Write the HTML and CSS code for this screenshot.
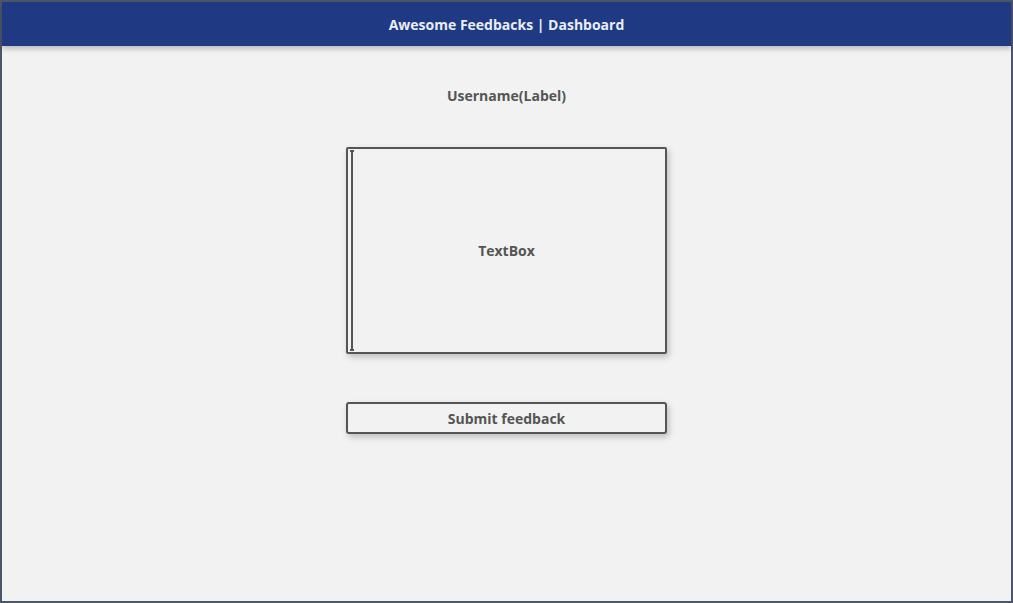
FILE: index.html
```html
<!DOCTYPE html>
<html>
<head>
<meta charset="utf-8">
<link rel="stylesheet" href="styles.css">
</head>
<body>
<div class="frame">
  <header class="topbar">Awesome Feedbacks | Dashboard</header>
  <main class="content">
    <div class="label">Username(Label)</div>
    <div class="textbox">
      <span class="caret"></span>
      <span class="tb-text">TextBox</span>
    </div>
    <button class="submit">Submit feedback</button>
  </main>
</div>
</body>
</html>
```

FILE: styles.css
```css
html, body {
  margin: 0;
  padding: 0;
}
body {
  width: 1013px;
  height: 603px;
  overflow: hidden;
  font-family: "Open Sans", "Noto Sans", sans-serif;
}
.frame {
  box-sizing: border-box;
  width: 1013px;
  height: 603px;
  border: 2px solid #4c5668;
  background: #f2f2f2;
  display: flex;
  flex-direction: column;
}
.topbar {
  height: 44px;
  background: #1f3a82;
  color: #e9edf6;
  font-weight: 700;
  font-size: 14px;
  display: flex;
  align-items: center;
  justify-content: center;
  box-shadow: 0 3px 5px rgba(0,0,0,0.22);
  position: relative;
  z-index: 1;
  box-sizing: border-box;
}
.content {
  display: flex;
  flex-direction: column;
  align-items: center;
  padding-top: 40px;
}
.label {
  font-size: 14px;
  font-weight: 700;
  color: #555555;
  height: 20px;
  line-height: 20px;
}
.textbox {
  margin-top: 41px;
  box-sizing: border-box;
  width: 321px;
  height: 207px;
  border: 2px solid #555555;
  border-radius: 2px;
  box-shadow: 2px 3px 6px rgba(0,0,0,0.22);
  display: flex;
  align-items: center;
  justify-content: center;
  position: relative;
  background: #f2f2f2;
}
.caret {
  position: absolute;
  left: 3px;
  top: 1px;
  bottom: 1px;
  width: 2px;
  background: #555555;
}
.caret::before, .caret::after {
  content: "";
  position: absolute;
  left: -1px;
  width: 4px;
  height: 2px;
  background: #555555;
}
.caret::before { top: 0; }
.caret::after { bottom: 0; }
.tb-text {
  font-size: 14px;
  font-weight: 700;
  color: #555555;
}
.submit {
  margin-top: 48px;
  box-sizing: border-box;
  width: 321px;
  height: 32px;
  border: 2px solid #555555;
  border-radius: 3px;
  background: #f2f2f2;
  box-shadow: 2px 3px 6px rgba(0,0,0,0.22);
  font-family: "Open Sans", "Noto Sans", sans-serif;
  font-size: 14px;
  font-weight: 700;
  color: #555555;
  padding: 0;
}
```
